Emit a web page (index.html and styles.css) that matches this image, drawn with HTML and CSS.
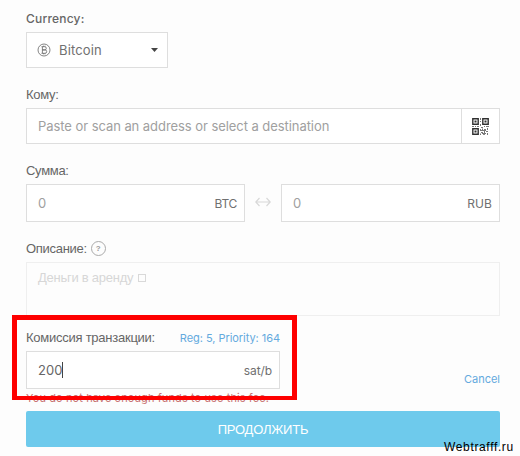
FILE: index.html
```html
<!DOCTYPE html>
<html lang="ru">
<head>
<meta charset="utf-8">
<title>Bitcoin</title>
<link rel="stylesheet" href="styles.css">
</head>
<body>
<form class="form">
  <section class="field">
    <div class="label latin"><span class="t-currency">Currency:</span></div>
    <div class="box select">
      <svg class="coin" width="14" height="14" viewBox="0 0 14 14" fill="none" stroke="#666" stroke-width=".8"><circle cx="7" cy="7" r="6"/><path d="M4.5 3.7h3.2a1.6 1.6 0 0 1 0 3.2H5.4h2.6a1.7 1.7 0 0 1 0 3.4H4.5M5.4 3.7v6.6M6.5 2.7v1M8 2.7v1M6.5 10.3v1M8 10.3v1"/></svg>
      <span class="t-bitcoin">Bitcoin</span>
      <svg class="caret" width="7" height="4" viewBox="0 0 7 4"><path d="M0 0h7L3.5 4z" fill="#444"/></svg>
    </div>
  </section>
  <section class="field">
    <div class="label"><span class="t-to">Кому:</span></div>
    <div class="box address">
      <span class="hint t-paste">Paste or scan an address or select a destination</span>
      <span class="scan">
        <svg width="17" height="17" viewBox="0 0 17 17" fill="none" stroke="#303030" stroke-width="1.4"><path d="M.8.8h5.4v5.4H.8zM10.8.8h5.4v5.4h-5.4zM.8 10.8h5.4v5.4H.8z"/><path d="M2.5 3.5h2M12.5 3.5h2M2.5 13.5h2" stroke-width="2"/><path d="M8.5 0v2M8.5 3v1M8.5 6v2M0 8.5h2M3 8.5h1M5 8.5h2M9 9.5h2M12 8.5h1M14 8.5h3M8.5 11v2M10.5 10.5v2M12 11.5h2M15.5 10v2M9 14.5h2M12.5 13v2M14 13.5h2M8.5 15.5v1.5M11 16.4h2M15.5 15v2M9 12.5h5M10 15.5h4" stroke="#777" stroke-width="1"/></svg>
      </span>
    </div>
  </section>
  <section class="field">
    <div class="label"><span class="t-sum">Сумма:</span></div>
    <div class="amounts">
      <div class="box amount"><span class="hint zero">0</span><span class="t-btc">BTC</span></div>
      <svg width="16" height="10" viewBox="0 0 16 10" fill="none" stroke="#d8d8d8" stroke-width="1.2"><path d="M.8 5h14.4M4.5 1 .8 5l3.7 4M11.5 1l3.7 4-3.7 4"/></svg>
      <div class="box amount"><span class="hint zero">0</span><span class="t-rub">RUB</span></div>
    </div>
  </section>
  <section class="field">
    <div class="label"><span class="t-desc">Описание:</span><span class="help">?</span></div>
    <div class="box note"><span class="t-note">Деньги в аренду</span><i class="tofu"></i></div>
  </section>
  <section class="fee">
    <div class="field">
      <div class="label spread"><span class="t-fee">Комиссия транзакции:</span><span class="link t-reg">Reg: 5, Priority: 164</span></div>
      <div class="box amount"><span class="value">200</span><span class="t-sat">sat/b</span></div>
      <div class="error"><span class="t-error">You do not have enough funds to use this fee.</span></div>
      <div class="highlight"></div>
    </div>
    <span class="link cancel">Cancel</span>
  </section>
  <div class="submit"><span class="t-submit">ПРОДОЛЖИТЬ</span></div>
</form>
<div class="watermark">Webtrafff.ru</div>
</body>
</html>
```
FILE: styles.css
```css
* { box-sizing: border-box; }
body {
  margin: 0;
  width: 520px;
  height: 456px;
  overflow: hidden;
  position: relative;
  background: #fdfdfd;
  color: #707070;
  font: 13px "Inter", "Liberation Sans", sans-serif;
  white-space: nowrap;
}
.form { width: 500px; padding: 9px 0 0 26px; }
.field { margin-bottom: 17px; }
.label {
  display: flex;
  align-items: center;
  height: 20px;
  margin-bottom: 3px;
  color: #666;
  font: 13px/20px "Liberation Sans", sans-serif;
}
.latin { font: 500 12px/20px "Inter", sans-serif; }
.box {
  display: flex;
  align-items: center;
  height: 36px;
  padding: 0 7px 0 11px;
  border: 1px solid #dedede;
  background: #fff;
}
.select { width: 142px; padding-left: 10px; }
.coin { margin-right: 8px; }
.caret { margin-left: auto; margin-right: 2px; }
.address { padding-right: 0; }
.hint { color: #a0a0a0; }
.scan {
  display: flex;
  align-items: center;
  justify-content: center;
  width: 38px;
  height: 34px;
  margin-left: auto;
  border-left: 1px solid #dedede;
}
.amounts { display: grid; grid-template-columns: 219px 16px 1fr; column-gap: 10px; align-items: center; }
.amounts svg { margin-top: -3px; }
.amount { height: 38px; justify-content: space-between; font-size: 12px; }
.zero { font-size: 13px; }
.help {
  width: 15px;
  height: 15px;
  margin: -2px 0 0 4px;
  border: 1px solid #aaa;
  border-radius: 50%;
  color: #999;
  font: bold 8px/13px "Liberation Sans", sans-serif;
  text-align: center;
}
.note {
  height: 54px;
  align-items: flex-start;
  padding-top: 6px;
  border-color: #efefef;
  background: #fdfdfd;
  color: #d7d7d7;
  font: 13px/18px "Liberation Sans", sans-serif;
}
.tofu { width: 8px; height: 8px; margin: 5px 0 0 5px; border: 1px solid #d9d9d9; }
.fee { display: flex; justify-content: space-between; height: 83px; margin-top: -5px; }
.fee .field { position: relative; width: 254px; margin: 0; }
.spread { justify-content: space-between; }
.link { color: #64aade; font: 11px/16px "Inter", sans-serif; }
.value { color: #666; font-size: 13px; border-right: 1px solid #444; line-height: 16px; }
.error { height: 18px; color: #c87070; font-size: 11px; line-height: 18px; }
.highlight {
  position: absolute;
  left: -14px;
  top: -13px;
  width: 285px;
  height: 85px;
  border: 5px solid #fe0000;
  border-bottom-width: 4px;
}
.cancel { margin-top: 43px; }
.submit {
  display: flex;
  align-items: center;
  justify-content: center;
  height: 36px;
  border-radius: 2px;
  background: #6ecaec;
  color: #fff;
  font: 13px "Liberation Sans", sans-serif;
}
.watermark {
  position: absolute;
  left: 444px;
  top: 439px;
  color: #000;
  font: 12px/16px "Liberation Sans", sans-serif;
  letter-spacing: .65px;
}
.t-currency { letter-spacing: .2px; }
.t-bitcoin { letter-spacing: .15px; }
.t-to { letter-spacing: -.3px; }
.t-paste { letter-spacing: -.06px; }
.t-sum { letter-spacing: -.3px; }
.t-btc { letter-spacing: -.3px; }
.t-rub { letter-spacing: .1px; }
.t-desc { letter-spacing: -.3px; }
.t-note { letter-spacing: -.25px; }
.t-fee { letter-spacing: -.25px; }
.t-reg { letter-spacing: -.05px; }
.t-sat { letter-spacing: -.1px; }
.t-error { letter-spacing: .1px; }
.t-submit { letter-spacing: -.2px; }
```
